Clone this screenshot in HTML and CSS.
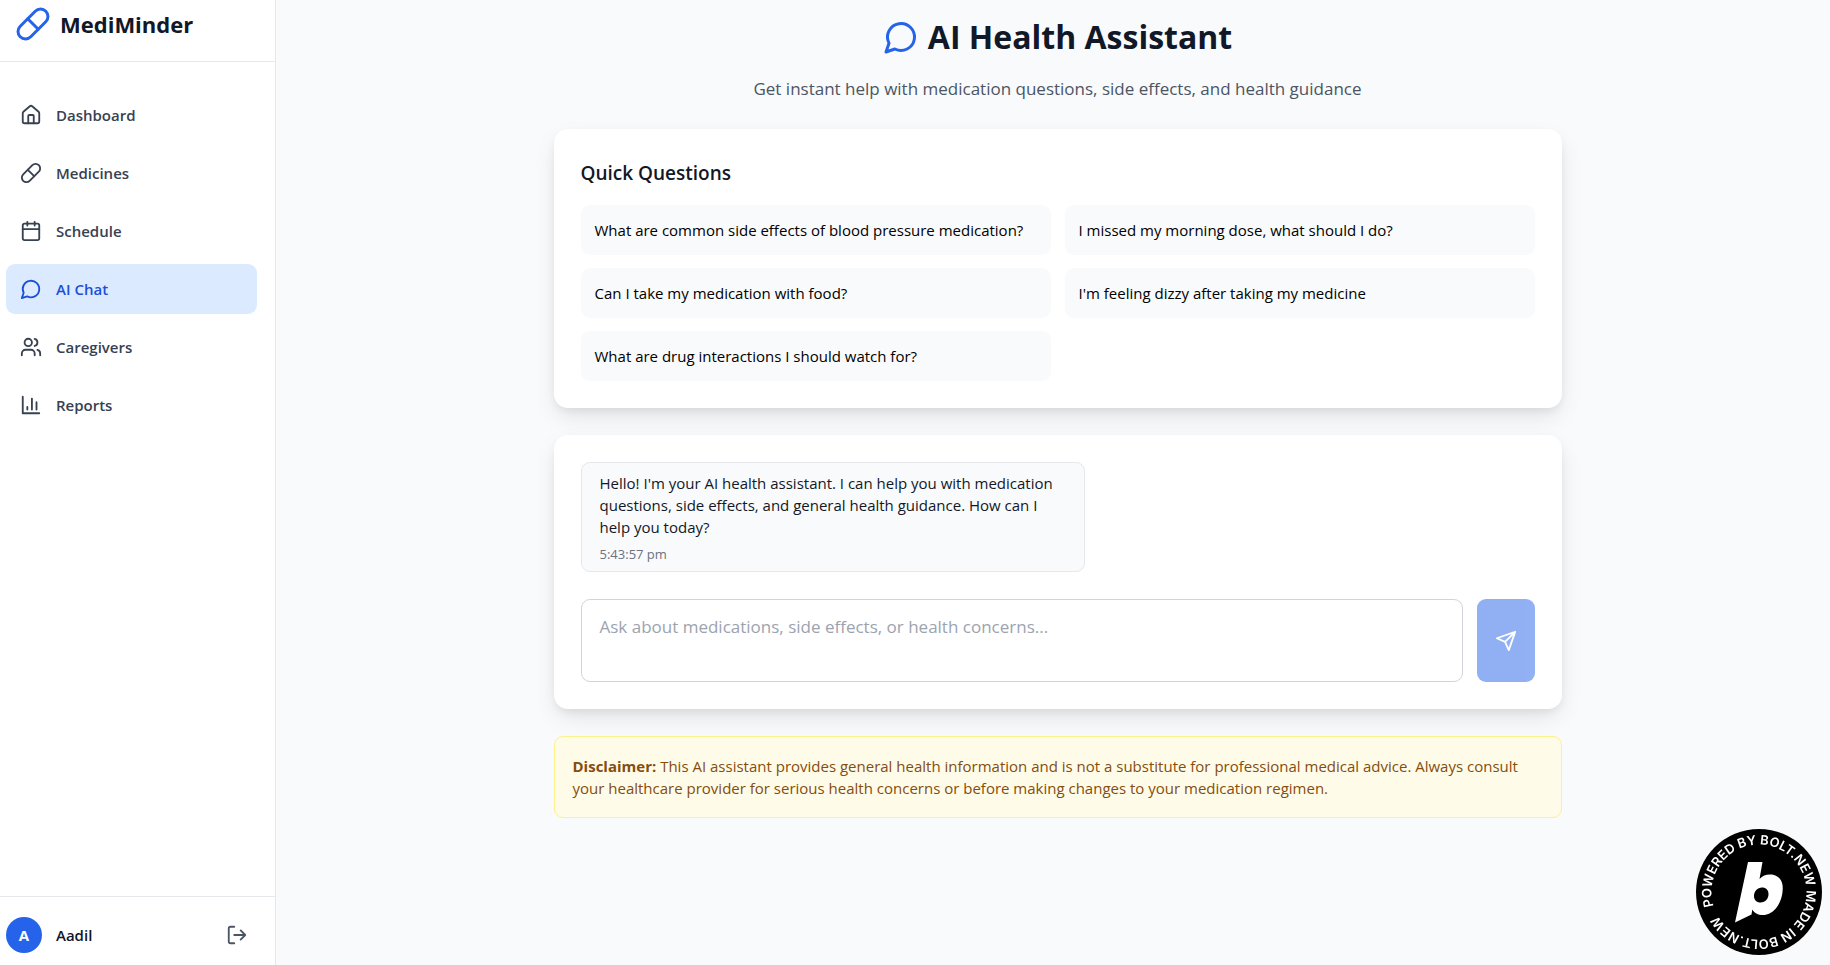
FILE: index.html
```
<!DOCTYPE html>
<html lang="en">
<head>
    <meta charset="UTF-8">
    <meta name="viewport" content="width=device-width, initial-scale=1.0">
    <title>MediMinder - AI Health Assistant</title>
    <link rel="stylesheet" href="styles.css">
</head>
<body>
    <!-- shared icons -->
    <svg class="sprite" aria-hidden="true">
        <symbol id="pill" viewBox="0 0 24 24">
            <path d="m10.5 20.5 10-10a4.95 4.95 0 1 0-7-7l-10 10a4.95 4.95 0 1 0 7 7Z"/>
            <path d="m8.5 8.5 7 7"/>
        </symbol>
        <symbol id="chat" viewBox="0 0 24 24">
            <path d="M7.9 20A9 9 0 1 0 4 16.1L2 22Z"/>
        </symbol>
    </svg>

    <div class="app">
        <aside class="sidebar">
            <div class="brand">
                <svg class="icon icon-lg"><use href="#pill"/></svg>
                <span class="brand-name">MediMinder</span>
            </div>

            <nav class="nav">
                <a class="nav-link" href="#dashboard">
                    <svg class="icon" viewBox="0 0 24 24">
                        <path d="M15 21v-8a1 1 0 0 0-1-1h-4a1 1 0 0 0-1 1v8"/>
                        <path d="M3 10a2 2 0 0 1 .709-1.528l7-5.999a2 2 0 0 1 2.582 0l7 5.999A2 2 0 0 1 21 10v9a2 2 0 0 1-2 2H5a2 2 0 0 1-2-2z"/>
                    </svg>
                    Dashboard
                </a>
                <a class="nav-link" href="#medicines">
                    <svg class="icon"><use href="#pill"/></svg>
                    Medicines
                </a>
                <a class="nav-link" href="#schedule">
                    <svg class="icon" viewBox="0 0 24 24">
                        <path d="M8 2v4M16 2v4M3 10h18"/>
                        <rect x="3" y="4" width="18" height="18" rx="2"/>
                    </svg>
                    Schedule
                </a>
                <a class="nav-link active" href="#chat-page" aria-current="page">
                    <svg class="icon"><use href="#chat"/></svg>
                    AI Chat
                </a>
                <a class="nav-link" href="#caregivers">
                    <svg class="icon" viewBox="0 0 24 24">
                        <path d="M16 21v-2a4 4 0 0 0-4-4H6a4 4 0 0 0-4 4v2"/>
                        <circle cx="9" cy="7" r="4"/>
                        <path d="M22 21v-2a4 4 0 0 0-3-3.87M16 3.13a4 4 0 0 1 0 7.75"/>
                    </svg>
                    Caregivers
                </a>
                <a class="nav-link" href="#reports">
                    <svg class="icon" viewBox="0 0 24 24">
                        <path d="M3 3v18h18"/>
                        <path d="M18 17V9M13 17V5M8 17v-3"/>
                    </svg>
                    Reports
                </a>
            </nav>

            <div class="user">
                <span class="avatar">A</span>
                <span class="user-name">Aadil</span>
                <button class="logout" type="button" aria-label="Log out">
                    <svg class="icon" viewBox="0 0 24 24">
                        <path d="M9 21H5a2 2 0 0 1-2-2V5a2 2 0 0 1 2-2h4"/>
                        <path d="m16 17 5-5-5-5M21 12H9"/>
                    </svg>
                </button>
            </div>
        </aside>

        <main class="main" id="chat-page">
            <div class="content">
                <header class="page-header">
                    <h1 class="title">
                        <svg class="icon icon-lg"><use href="#chat"/></svg>
                        AI Health Assistant
                    </h1>
                    <p class="subtitle">Get instant help with medication questions, side effects, and health guidance</p>
                </header>

                <section class="card">
                    <h2 class="card-title">Quick Questions</h2>
                    <div class="questions">
                        <button class="question" type="button">What are common side effects of blood pressure medication?</button>
                        <button class="question" type="button">I missed my morning dose, what should I do?</button>
                        <button class="question" type="button">Can I take my medication with food?</button>
                        <button class="question" type="button">I'm feeling dizzy after taking my medicine</button>
                        <button class="question" type="button">What are drug interactions I should watch for?</button>
                    </div>
                </section>

                <section class="card chat">
                    <div class="message">
                        <p class="message-text">Hello! I'm your AI health assistant. I can help you with medication questions, side effects, and general health guidance. How can I help you today?</p>
                        <p class="message-time">5:43:57 pm</p>
                    </div>
                    <form class="composer">
                        <textarea class="input" rows="2" aria-label="Your question" placeholder="Ask about medications, side effects, or health concerns..."></textarea>
                        <button class="send" type="submit" aria-label="Send" disabled>
                            <svg class="icon" viewBox="0 0 24 24">
                                <path d="m22 2-7 20-4-9-9-4ZM22 2 11 13"/>
                            </svg>
                        </button>
                    </form>
                </section>

                <p class="disclaimer"><strong>Disclaimer:</strong> This AI assistant provides general health information and is not a substitute for professional medical advice. Always consult your healthcare provider for serious health concerns or before making changes to your medication regimen.</p>
            </div>
        </main>
    </div>

    <a class="badge" href="#bolt" aria-label="Powered by Bolt.new">
        <svg viewBox="0 0 126 126">
            <circle cx="63" cy="63" r="63"/>
            <path id="ring" fill="none" d="M17.6 77A47.5 47.5 0 1 1 108.4 77A47.5 47.5 0 0 1 17.6 77"/>
            <text class="badge-text"><textPath href="#ring">POWERED BY BOLT.NEW MADE IN BOLT.NEW</textPath></text>
            <path class="badge-mark" fill-rule="evenodd" d="M52 33H66.500L63.500 50C67 46 71 45 76 45.500C84 47 88 53 86.500 63C85 76 77 86 67 86C62 86 58 84 56.300 80.500L55.500 85.500L39 93.500ZM66 58.500C61.500 58.500 58 62.500 58 67C58 71 60.500 73.500 64.500 73.500C69.500 73.500 72.500 69.500 72.500 65C72.500 61 70 58.500 66 58.500Z"/>
        </svg>
    </a>
</body>
</html>
```

FILE: styles.css
```
*{
    box-sizing: border-box;
    margin: 0;
    padding: 0;
}

body{
    font-family: 'Open Sans', 'Noto Sans', sans-serif;
    font-size: 15px;
    line-height: 26px;
    color: #111827;
    background: #f9fafb;
}

button, textarea{
    font: inherit;
    color: inherit;
    border: none;
}

button{
    cursor: pointer;
}

.sprite{
    display: none;
}

.icon{
    width: 22px;
    height: 22px;
    flex: none;
    fill: none;
    stroke: currentColor;
    stroke-width: 2;
    stroke-linecap: round;
    stroke-linejoin: round;
}

.icon-lg{
    width: 36px;
    height: 36px;
    color: #2563eb;
}

.app{
    display: flex;
    min-height: 100vh;
}

/* sidebar */
.sidebar{
    width: 276px;
    flex: none;
    display: flex;
    flex-direction: column;
    background: #ffffff;
    border-right: 1px solid #e5e7eb;
}

.brand{
    display: flex;
    align-items: center;
    gap: 9px;
    padding: 6px 15px 19px;
    border-bottom: 1px solid #e5e7eb;
}

.brand-name{
    font-size: 22px;
    font-weight: 700;
}

.nav{
    flex: 1;
    display: flex;
    flex-direction: column;
    gap: 8px;
    padding: 28px 18px 28px 6px;
}

.nav-link{
    display: flex;
    align-items: center;
    gap: 14px;
    padding: 12px 14px;
    border-radius: 9px;
    color: #374151;
    font-weight: 600;
    text-decoration: none;
}

.nav-link.active{
    background: #dbeafe;
    color: #1d4ed8;
}

.user{
    display: flex;
    align-items: center;
    gap: 14px;
    padding: 20px 20px 12px 6px;
    border-top: 1px solid #e5e7eb;
}

.avatar{
    width: 36px;
    height: 36px;
    line-height: 36px;
    border-radius: 50%;
    background: #2563eb;
    color: #ffffff;
    font-weight: 700;
    text-align: center;
}

.user-name{
    flex: 1;
    font-weight: 600;
}

.logout{
    display: flex;
    padding: 7px;
    background: none;
    color: #4b5563;
}

/* main column */
.main{
    flex: 1;
    padding: 13px 27px 27px 36px;
}

.content{
    max-width: 1008px;
    margin: 0 auto;
    display: flex;
    flex-direction: column;
    gap: 27px;
}

.page-header{
    text-align: center;
}

.title{
    display: flex;
    align-items: center;
    justify-content: center;
    gap: 9px;
    margin-bottom: 14px;
    font-size: 32px;
    line-height: 48px;
    font-weight: 700;
}

.subtitle{
    font-size: 17px;
    line-height: 27px;
    color: #4b5563;
}

.card{
    padding: 27px;
    border-radius: 14px;
    background: #ffffff;
    box-shadow: 0 10px 25px -3px rgba(0, 0, 0, 0.1), 0 4px 10px -2px rgba(0, 0, 0, 0.08);
}

.card-title{
    margin-bottom: 15px;
    font-size: 19px;
    line-height: 34px;
    font-weight: 600;
}

.questions{
    display: grid;
    grid-template-columns: 1fr 1fr;
    gap: 13px 14px;
}

.question{
    padding: 12px 14px;
    border-radius: 9px;
    background: #f9fafb;
    color: #000000;
    text-align: left;
}

.chat{
    display: flex;
    flex-direction: column;
    gap: 27px;
}

.message{
    max-width: 504px;
    padding: 9px 18px;
    border: 1px solid #e5e7eb;
    border-radius: 9px;
    background: #f9fafb;
}

.message-text{
    line-height: 22px;
}

.message-time{
    margin-top: 8px;
    font-size: 13px;
    line-height: 16px;
    color: #6b7280;
}

.composer{
    display: flex;
    gap: 14px;
}

.input{
    flex: 1;
    padding: 13px 18px 12px;
    border: 1px solid #d1d5db;
    border-radius: 9px;
    background: #ffffff;
    font-size: 17px;
    line-height: 28px;
    resize: none;
}

.input::placeholder{
    color: #9ca3af;
}

.send{
    display: flex;
    align-items: center;
    padding: 18px;
    border-radius: 9px;
    background: #2563eb;
    color: #ffffff;
}

.send:disabled{
    opacity: 0.5;
    cursor: default;
}

.disclaimer{
    padding: 18px;
    border: 1px solid #fef08a;
    border-radius: 9px;
    background: #fefce8;
    color: #854d0e;
    line-height: 22px;
}

/* round badge in the corner */
.badge{
    position: fixed;
    right: 8px;
    bottom: 10px;
    width: 126px;
    height: 126px;
}

.badge-text{
    font-family: Inter, sans-serif;
    font-size: 13px;
    font-weight: 600;
    fill: #ffffff;
}

.badge-mark{
    fill: #ffffff;
}
```
